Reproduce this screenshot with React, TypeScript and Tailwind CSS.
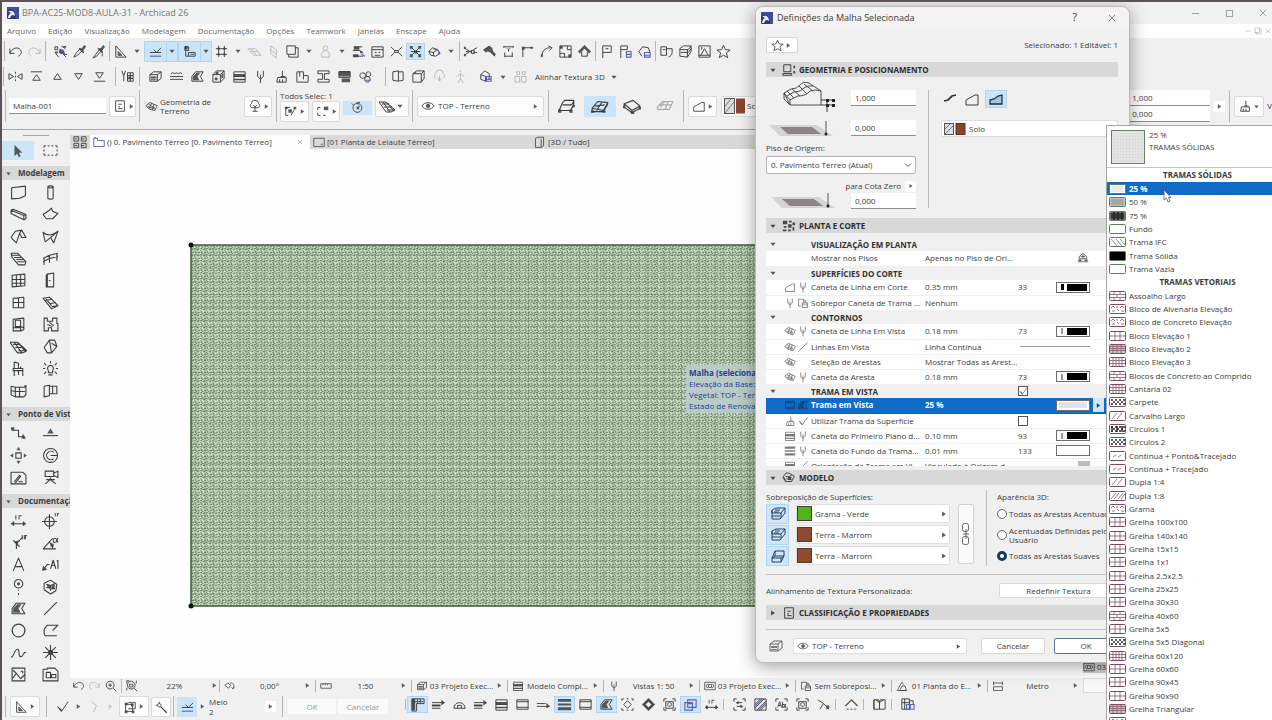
import { useState, type ReactNode } from 'react'

// s = stroke, f = fill, a = blue accent stroke
type Glyph = { s?: string; f?: string; a?: string }

const GLYPHS: Record<string, Glyph> = {
  undo: { s: 'M2 5v5h5M2 10C4 5 9 3 12 5s3 6-1 8' },
  redo: { s: 'M14 5v5H9M14 10C12 5 7 3 4 5s-3 6 1 8' },
  find: { s: 'M2 3h3v3H2zM10 10l4 4M9 2l4 3M3 10l3 4', f: 'M7 5l4 1 2 4-4 1-3-2zM2 8h3v2H2zM11 2h3v2h-3z', a: 'M8 6l3 4M11 11h4' },
  pick: { s: 'M2 14l2-4 5-5 2 2-5 5z', f: 'M8 4l2 1 3-4 2 2-3 4 1 2-1 1-5-5z' },
  inject: { s: 'M2 15l3-4 5-6 1 2-5 6z', f: 'M8 4l2 1 3-4 2 2-3 4 1 2-1 1-5-5z', a: 'M12 10v3' },
  setsq: { s: 'M3 2v12h11zM5.500 8v4h4z', f: 'M6 9v3h3z' },
  guide: { s: 'M2 9h12M6 6l3 3 5-5', a: 'M2 13h12' },
  snap: { s: 'M3 3h4v4H3zM4 8v5h3M7 9h7v4H7z', f: 'M3 2h3v4H3z', a: 'M9 11h4' },
  grid: { s: 'M5 2v12M11 2v12M2 5h12M2 11h12', f: 'M4 4h2v2H4zM10 4h2v2h-2zM4 10h2v2H4zM10 10h2v2h-2z' },
  plane: { s: 'M1 5h8l6 7H7zM4 5l6 7M3 8h9' },
  plane2: { s: 'M5 2l6 4v9l-6-5zM5 6l6 5' },
  cube: { s: 'M2 2h9v9H2zM4 11v3h10V4h-3' },
  person: { s: 'M8 2a2.500 2.500 0 1 1 0 5a2.500 2.500 0 1 1 0-5M4 14V10l2-3h4l2 3v4z' },
  trace: { s: 'M3 3h9M2 7h7l4 3M3 13h10', f: 'M3 3h6v3H3zM9 6l4 3-3 1zM2 11h6v3H2z', a: 'M11 11l4 2' },
  win: { s: 'M2 3h12v11H2zM2 6h12M5 9h2M9 9h2M5 12h6' },
  resize: { s: 'M2 3l4 4M14 3l-4 4M2 13l4-4M14 13l-4-4M6 7h4v2H6z' },
  group: { s: 'M4 4l8 8M12 4l-8 8M3 8h10', f: 'M2 2h3v3H2zM11 2h3v3h-3zM2 11h3v3H2zM11 11h3v3h-3zM7 7h3v3H7z' },
  morphb: { s: 'M2 8l4-4 5 2 3 4-5 3-5-1zM2 8l5 1 4-3M7 9v4', a: 'M7 5l5 2 1 4' },
  cut: { s: 'M1 4l8 5M1 12l8-5M11 6l4-2M11 9h4M3 8h3M9 7h3v3H9z', f: 'M1 3h2v2H1zM1 11h2v2H1z' },
  trim: { s: 'M9 8l5 5M3 6l6-4', f: 'M1 6l6-4 4 2 1 4 3 3-2 2-4-4-3-1-2 1z' },
  split: { s: 'M3 3h10M3 2v2M13 2v2M8 5v3M4 9v5M12 9v5M4 13h8', a: 'M6 5h1M9 5h1' },
  corner: { s: 'M3 14V4h9', f: 'M2 3h3v3H2zM11 3h3v2h-3z' },
  fillet: { s: 'M3 13C3 8 6 4 12 4M10 2l4 2-3 3', f: 'M2 11h2v3H2z' },
  box: { s: 'M2 2h12v12H2zM2 10h5v4M10 2v4h4', f: 'M2 2h3v3H2zM11 11h3v3h-3z' },
  house: { s: 'M5 8v5h6V8', f: 'M1 8l7-7 7 7-2 2-5-5-5 5z' },
  flag: { s: 'M4 15V2h9v7H4M7 5h3' },
  flagb: { s: 'M3 15V2h7v4H3', a: 'M9 8h5v6H9zM9 11h5' },
  cloud: { s: 'M5 13L2 8l4-5 6 1 2 5', a: 'M8 9h6v5H8zM8 12h6' },
  copy: { s: 'M2 3h6v9H2zM8 5h6v4c0 3-2 4-4 5M4 6h3' },
  layers: { s: 'M2 5l4-3h8l-3 4H3zM2 5v8l8 1 4-6V2M3 9h8l3-4M10 6v8' },
  lay2: { s: 'M2 4l4-2h9l-4 5H2zM2 4v9h8l5-6V2M2 10h8M11 7v5M5 4h5M4 6h5' },
  detail: { s: 'M2 2h12v12H2zM4 12l4-7 4 7M2 12h12M5 3v3' },
  star: { s: 'M8 1.500l2 4.500 5 .5-4 3 1.500 5L8 12l-4.500 2.500L5 9.500l-4-3 5-.5z' },
  mirror: { s: 'M1 5v6l5-3zM15 5v6l-5-3zM8 3v2M8 7v2M8 11v2' },
  upbar: { s: 'M2 3h12M8 6l4 6H4z' },
  up: { s: 'M8 5l4 6H4z' },
  down: { s: 'M8 11l4-6H4z' },
  downbar: { s: 'M2 13h12M8 10l4-6H4z' },
  penset: { s: 'M2 2l2 5v6M6 2l-2 5M8 4h6v9H8zM8 7h6M8 10h6M11 4v9', f: 'M9 8h3v3H9z' },
  slabs: { s: 'M2 6l4-3h8v7l-4 3H2zM2 6h8v7M10 6l4-3', f: 'M3 8h6v2H3zM3 11h6v1H3z' },
  waves: { s: 'M1 8h14M1 11h14M2 5l2-1 2 1 2-1 2 1 2-1 2 1' },
  fillc: { s: 'M2 13V8l4-5h8l-3 5 3 5z', f: 'M3 12V8l4-4h4L8 8l2 4z' },
  solid: { s: 'M2 6l4-4h8v8l-4 4H2zM2 6h8v8M10 6l4-4', f: 'M5 3h3v3H5zM4 9h3v3H4zM11 6l2-2v5l-2 1z' },
  layered: { s: 'M2 3h12v11H2zM2 6h12M2 8h12M2 11h12', f: 'M2 6h12v2H2zM2 11h12v1H2z' },
  pen: { s: 'M5 2v6l3 3 3-3V2M8 6v9' },
  brush: { s: 'M9 2v6M4 9h9v5H3zM7 8h5M6 11v3M9 11v3' },
  zonei: { s: 'M2 3h7v4h5v7H2zM5 3v5M9 7v4' },
  beami: { s: 'M2 2h12v3H9v6h5v3H2v-3h5V5H2z' },
  sched: { s: 'M2 3h12v6H2z', f: 'M2 2h12v6H2zM5 10h9v4H5z' },
  rings: { s: 'M5 4a3 3 0 1 0 .1 0M11 3a2.500 2.500 0 1 0 .1 0M10 8a3 3 0 1 0 .1 0', a: 'M8 12h5' },
  vcube: { s: 'M3 3l6-1v11l-6-1zM9 3h5v9l-5 1' },
  vcube2: { s: 'M2 5l4-3h8v8l-3 4H2zM2 5h9v9M11 5l3-3M5 5V3' },
  surfbox: { s: 'M2 10l3-7h9v5l-3 6H2zM5 3v5h9M5 8l-3 2h9l3-2M11 10v4' },
  cloud2: { s: 'M4 10a3 3 0 0 1 0-5a4 4 0 0 1 8 0a3 3 0 0 1 0 5M8 7v6M6 10l2 3 2-3' },
  walk: { s: 'M8 1.500v2M8 5v5l-3 5M8 10l3 5M4 8l4-3 4 3' },
  rend: { s: 'M3 6l4-4 5 3v5l-4 3-5-2zM3 6l5 2v5', a: 'M9 8h5v5H9zM9 11h5' },
  weights: { s: 'M2 8h5v6H2zM9 8h5v6H9zM4 3h3v3H4zM10 3h3v3h-3z' },
  form: { s: 'M3 2h10v12H3zM6 6h4M6 9h2M6 11h5' },
  meshi: { s: 'M1 7l5-4 9 4-3 6-7-2zM4 5l8 5M8 4L5 11M11 5L9 12M3 8l9 3' },
  tree: { s: 'M8 8v6M5 14h6M4 10a3 3 0 0 1 0-5a4 3.500 0 0 1 8 0a3 3 0 0 1 0 5zM6 7l2 2 2-2' },
  selA: { s: 'M2 4h5M2 4v9h3M8 13l4-7', f: 'M1 3h3v3H1zM5 6h4v4H5zM11 3h3v3h-3z' },
  selB: { s: 'M2 4h3M2 4v3M2 10v3h3M8 13h3', f: 'M9 3h5v4H9z' },
  clock: { s: 'M8 3a5.500 5.500 0 1 0 3 1M8 8l3-2M3 5L1 3', f: 'M6 2l5-1-1 4zM7 7h3v3H7z' },
  eye: { s: 'M1 8c3-5 11-5 14 0c-3 5-11 5-14 0z', f: 'M8 5.500a2.500 2.500 0 1 0 .1 0z' },
  geo1: { s: 'M1 12l3-7 2-2h8v4l-3 5zM4 7h8l2-3M1 12h10', f: 'M0 11h3v3H0zM10 11h3v3h-3zM13 7h2v2h-2z' },
  geo2: { s: 'M1 10l5-6 9 1-4 7zM3 8l9-1M5 12l5-8M1 10v3h10l4-7', f: 'M0 12h3v2H0zM10 12h3v2h-3z' },
  geo3: { s: 'M1 6l8-3 6 5-7 4zM1 6v3l7 5 7-4V8M8 12v2', f: 'M0 8h2v2H0zM7 13h3v2H7zM14 9h2v2h-2z' },
  geo4: { s: 'M1 9l5-5h9l-3 7H2zM4 9l4-5M8 11l3-7M3 7h11' },
  slope: { s: 'M2 14V9l9-5 3 0v10z' },
  thumbs: { s: 'M1 2h5.500v5H1zM9.500 2H15v5H9.500zM1 9.500h5.500v5H1zM9.500 9.500H15v5H9.500zM2 4.500h3M10 4.500h3M2 12h3M10 12h3' },
  plan: { a: 'M1 14V3h5v3h9v8zM1 3l3-1' },
  sheet: { s: 'M1 3h14v11H1zM10 11h3' },
  tcube: { s: 'M3 3l3-1.500h7V12l-3 2H3zM10 14V4' },
  arrow: { f: 'M4 1v13l3-3 2 4 2-1-2-4h4z' },
  marquee: { s: 'M1 3h2M5 3h2M9 3h2M13 3h2v2M15 7v2M15 11v2h-2M11 13H9M7 13H5M3 13H1v-2M1 9V7M1 5V3' },
  wall: { s: 'M1.500 3.500L14.500 2v9L9 13.500l-7.500.5z' },
  column: { s: 'M5.500 2.500c1-1 4-1 5 0v11c-1 1-4 1-5 0zM5.500 3c1 1 4 1 5 0' },
  beam: { s: 'M1 4l2-1 12 5v4l-2 1L1 7zM1 4l12 5v4M13 9l2-1' },
  slab: { s: 'M1 8l6-4 2-2 1 3 5 2-5 5H4z' },
  roof: { s: 'M1 9l4-6 6-1 4 7h-4l-2-4M11 2L9 5l-3 9-5-5' },
  shell: { s: 'M1 4c4 4 9 3 14-1l-4 11-3-5-5 4zM1 4l2 9M8 9l7-6' },
  stair: { s: 'M1 3h6l8 8-1 3H8L2 7zM2 5h7M4 7h7M6 9h7M7 11h7' },
  rail: { s: 'M1 8l6-3 8-2M1 11l6-3 8-2M2 8v6M7 5v7M14 3v7' },
  curtain: { s: 'M2 3l12-1v11L2 14zM2 7h12M2 10.500h12M6 3v11M10 2.500v11' },
  door: { s: 'M5 2l6-1v13H5zM5 2v12l-1 0V3zM6.500 8h1.500' },
  window: { s: 'M3 4l10-1v10H3zM3 8h10M8 3v10' },
  skyl: { s: 'M1 4l6-1 8 8-6 3zM4 5l5 6M3 6l7-1M8 9l5-1M9 12l5-1' },
  opening: { s: 'M3 3l10-1v11l-3 1H3zM5 4h5v6H5zM3 11h7v3M10 10l3 1' },
  zone: { s: 'M2 2h3v3h5V2h4v5h1v7H9v-3H6v3H2zM5 8l5 2M7 6l4 3' },
  mesh: { s: 'M0 4h7l9 8-4 2H7zM3 6h7M5 9h8M8 12h7M4 4l7 10M7 4l8 9' },
  morph: { s: 'M2 9l5-7h5l2 6-5 6H5zM7 2l2 12M9 5l5 3' },
  chair: { s: 'M4 2l4 1v5H4zM3 8h9v2H3zM4 10v5M8 10v4M12 10v5M10 6v2' },
  lamp: { s: 'M8 5a3 3 0 0 1 2 5v2H6v-2a3 3 0 0 1 2-5M6 14h4M8 1v2M2 3l2 2M14 3l-2 2M1 8h2M13 8h2M2 13l2-2M14 13l-2-2' },
  wall2: { s: 'M1 4l4 1h9V3M1 4v8l4 2h8l2-2V3M1 8l4 1h9M5 5v9M9 5v9' },
  panel: { s: 'M2 4l5-1v10l-5 1zM7 4h7v7H7M10 4v7' },
  section: { s: 'M2 5h6v6h6', f: 'M1 2h3v3H1zM12 8l3 5h-4z' },
  elev: { s: 'M1 10h14', f: 'M8 3l3 5H5z' },
  interior: { s: 'M5.500 5.500h5v5h-5z', f: 'M8 0l2 3H6zM8 16l2-3H6zM0 8l3-2v4zM16 8l-3-2v4z' },
  detailc: { s: 'M8 1.500a6.500 6.500 0 1 0 .1 0M11 5a4 4 0 1 0 0 6M8 8h7' },
  worksheet: { s: 'M1 3h11l3 3v8H1zM4 12l5-6 1 1-5 6M8 12h4' },
  camera: { s: 'M3 2h8v5H3zM11 4l4-2v6l-4-2M8 8v2M3 14l5-4 5 4M4 10h8' },
  dim: { s: 'M1 11h14M3 9v4M13 9v4', f: 'M1 11l3-2v4zM15 11l-3-2v4zM5 3h1v4H5zM8 3h3v1H9v3H8z' },
  level: { s: 'M7 4.500a4.500 4.500 0 1 0 .1 0M7 2v14M0 9h14', f: 'M12 1h1v3h-1zM14 1h2v1h-1v2h-1z' },
  radial: { s: 'M6 9l6-6M3 6l6 6M6 9v5', f: 'M4 7l4-1-1 5zM11 1h1v4h-1zM13 1h3v1h-1v3h-2z' },
  angle: { s: 'M1 14L10 4M1 14h12M7 8c2 1 3 3 3 6M12 4c-2 0-2 4 0 4s2-3 3-4M12 4c2 0 2 3 3 4', f: 'M8 9h3v3H8z' },
  text: { s: 'M3 14L8 2l5 12M5 10h6' },
  label: { s: 'M1 13l4-5h2M8 12l2.500-8 2.500 8M9 9h3M15 4v8M14 5l1-1', f: 'M0 14l1-5 4 4z' },
  hotlink: { s: 'M8 1.500a4 4 0 1 0 .1 0M8 11v1M8 14v2', f: 'M8 4a1.500 1.500 0 1 0 .1 0z' },
  patch: { s: 'M2 5l6-3 6 4-1 6-5 3-6-4zM4 6l4 1v5M8 7l5-2M4 9l8 1', f: 'M5 6l3 1v3l-3-1zM9 7l3-1v4l-3 1z' },
  line: { s: 'M2 14L14 2' },
  circle: { s: 'M8 2a6 6 0 1 0 .1 0' },
  poly: { s: 'M14 13H3l-1-2V7l3-4h10l-5 5' },
  spline: { s: 'M1 12c2 2 3-7 6-7s0 7 3 7 2-5 5-4' },
  hot: { s: 'M8 1v14M1 8h14M3 3l10 10M13 3L3 13', f: 'M8 5.500a2.500 2.500 0 1 0 .1 0z' },
  figure: { s: 'M2 2h12v12H2zM2 12l4-5 4 5 4-4M3 4l3 3M10 5h2v2' },
  drawing: { s: 'M1 3h4v-1h7l3 3v9H1zM4 6h4v5H4zM9 8h4v3H9z' },
  zoomi: { s: 'M7 2.500a4.500 4.500 0 1 0 .1 0M10.500 10.500L14 14M5 7h4M7 5v4' },
  zoomfit: { s: 'M7 2.500a4.500 4.500 0 1 0 .1 0M10.500 10.500L14 14M2 2v3M2 2h3M13 2v3M2 13v-3M5 6h4v3H5z' },
  rot: { s: 'M1 7l4-3 4 3-3 4zM8 4c5-1 6 4 4 7M10 10l2 2 2-3' },
  ruler: { s: 'M1 5h14v6H1zM4 5v2M7 5v2M10 5v2' },
  frame: { s: 'M1 3h14v10H1zM5 5L3 8l2 3M11 5l2 3-2 3M6 6h4v4H6z' },
  lock: { s: 'M2 3h7v3M2 3v9h3M7 8h7v6H7zM9 8V5h3v3', f: 'M7 10h7v1H7z' },
  roofi: { s: 'M2 13L8 3l2 3M8 8l-3 6h9l-2-6zM1 14h14' },
  dimh: { s: 'M2 2v5M14 2v5M2 4h12M2 9h12v5H2z' },
  check: { s: 'M3 8l4 5L14 3', f: 'M2 8l5 3 0 3z' },
  zig: { s: 'M5 3l5 4-3 7' },
  edit: { s: 'M3 5h8v8H3zM6 3h8v7H6M3 5l3-2', f: 'M2 3h3v3H2zM2 12h3v3H2zM10 12h3v3h-3zM9 4h3v3H9z' },
  wand: { s: 'M8 8l6 6M6 2v2M2 6h2M6 4a2 2 0 1 0 .1 0', f: 'M8 7l7 7-1 1-7-7z' },
  bars: { s: 'M1 6h13M1 9h9M1 12h9', f: 'M1 8h9v2H1zM11 3l4 3-4 3z' },
  barsf: { f: 'M1 2h14v3H1zM1 7h14v2H1zM1 11h14v3H1z' },
  tape: { s: 'M2 2h13v5H7v8H2zM2 5h12M5 2v12M4 2v12M8 2v4M11 2v4', f: 'M2 2h2v12H2z' },
  arc: { s: 'M2 12a6 6 0 0 1 12 0zM6 12V9h4v3' },
  arr: { s: 'M1 7h9M1 10h13', f: 'M11 6l4 4-4 2z' },
  plate: { s: 'M2 3h12v10H2zM2 5h12M2 11h12' },
  diamond: { s: 'M8 3l5 5-5 5-5-5z', f: 'M8 1l7 7-7 7-7-7zM8 5L5 8l3 3 3-3z' },
  diabox: { s: 'M2 2h2M7 2h2M12 2h2v2M14 12v2h-2M9 14H7M4 14H2v-2M2 4V2M8 4l4 4-4 4-4-4z' },
  stack: { a: 'M2 6h8v8H2zM5 3h9v8H5zM5 7h5' },
  abc: { s: 'M2 5V2h3M11 2h3v3M14 11v3h-3M5 14H2v-3M4 11l2-6 2 6M5 9h2M9 5v6h2V8H9M13 8h-1v3h1' },
  flip: { s: 'M2 5V2h3M11 2h3v3M14 11v3h-3M5 14H2v-3M5 6h6M5 10h6', f: 'M4 6l3-2v4zM12 10l-3-2v4z' },
  hatch: { s: 'M2 2h12v12H2zM2 8l6-6M2 12L12 2M4 14L14 4M8 14l6-6', a: 'M2 10l8-8M6 14l8-8' },
  imgf: { s: 'M2 5V2h3M11 2h3v3M14 11v3h-3M5 14H2v-3M4 5h8v7H4zM8 6a2 2 0 1 0 .1 0' },
  bend: { s: 'M2 3l6 4 4 4M8 7l-4 6', f: 'M11 9h3v4h-3z' },
  ridge: { s: 'M3 13h2M7 13h2M11 13h2', f: 'M1 9l7-7 7 7-1 1-6-6-6 6z' },
  book: { s: 'M2 3h5l1 2 1-2h5v10H2zM8 5v8M2 3v10M4 3L8 6l4-3' },
  story: { s: 'M3 6l5-4 5 4M3 6v4M13 6v4M8 3v6M4 9h8M1 13h14M5 6h6', f: 'M2 10h4v2H2zM10 10h4v2h-4z' },
  copyb: { s: 'M2 2h8v11H2zM2 6h8M5 2v11M10 4h4v4', a: 'M7 8h8v5H7zM11 8v5' },
  down1: { f: 'M4 6h8l-4 5z' },
  right1: { f: 'M5 4v8l6-4z' },
  terrain: { s: 'M1 7l4-5 4 1 5 3-3 6H4zM4 6l4 1 3-2M5 9l6 1M2 7l2 4', f: 'M7 6l4 1-1 3-3-1z' },
  geop: { s: 'M2 2h8v8H2zM1 12h10v2H1z', f: 'M13 3h2v3h-2zM13 9h2v3h-2z' },
  dots: { f: 'M1 2h5v4H1zM8 2h3v2H8zM12 4h3v3h-3zM2 8h3v2H2zM7 6h4v4H7zM12 9h2v4h-2zM1 12h4v2H1zM7 12h3v2H7z' },
  minus: { s: 'M3 8h10' },
  max: { s: 'M3.500 3.500h9v9h-9z' },
  close: { s: 'M3 3l10 10M13 3L3 13' },
}

function Icon({ name, className = 'size-4' }: { name: string; className?: string }) {
  const g = GLYPHS[name]
  return (
    <svg viewBox="0 0 16 16" className={`shrink-0 ${className}`} fill="none" strokeLinejoin="round" aria-hidden="true">
      {g.f && <path d={g.f} fill="currentColor" fillRule="evenodd" opacity=".85" />}
      {g.s && <path d={g.s} stroke="currentColor" strokeWidth="1" />}
      {g.a && <path d={g.a} stroke="#5a60b8" strokeWidth="1.2" />}
    </svg>
  )
}

// toolbar mini language: '|' separator, '_' small space, 'v' caret,
// leading '!' = active, leading '~' = disabled
function Tools({ items, cell }: { items: string[]; cell: string }) {
  return (
    <>
      {items.map((it, i) => {
        if (it === '|') return <span key={i} className="flex w-[3px] justify-center self-stretch py-[3px]"><span className="w-px bg-[#b5b5b5]" /></span>
        if (it === '_') return <span key={i} className="w-1" />
        if (it === 'v') return <button key={i} aria-label="Mais opções" className="flex w-[14px] justify-center"><Icon name="down1" className="size-[10px]" /></button>
        const active = it[0] === '!'
        const off = it[0] === '~'
        const name = active || off ? it.slice(1) : it
        return (
          <button
            key={i}
            aria-label={name}
            className={`flex items-center justify-center py-px ${cell} ${active ? 'bg-[#cbe4f8] outline -outline-offset-1 outline-[#b0d5f2]' : ''} ${off ? 'text-[#b9b9c0]' : ''}`}
          >
            <Icon name={name} className="size-[15px]" />
          </button>
        )
      })}
    </>
  )
}

function HotPair({ name }: { name: string }) {
  return (
    <span className="flex h-[21px] w-[34px] items-center border border-[#b0d5f2] bg-[#cbe4f8]">
      <button aria-label={name} className="flex w-[21px] justify-center"><Icon name={name} className="size-[15px]" /></button>
      <button aria-label="Mais opções" className="flex h-full flex-1 items-center justify-center border-l border-[#b0d5f2]"><Icon name="down1" className="size-[10px]" /></button>
    </span>
  )
}

const Sep = () => <span className="w-px shrink-0 self-stretch bg-[#b5b5b5]" />

const MENUS = ['Arquivo', 'Edição', 'Visualização', 'Modelagem', 'Documentação', 'Opções', 'Teamwork', 'Janelas', 'Enscape', 'Ajuda']

const PALETTE = [
  { title: 'Modelagem', tools: ['wall', 'column', 'beam', 'slab', 'roof', 'shell', 'stair', 'rail', 'curtain', 'door', 'window', 'skyl', 'opening', 'zone', 'mesh', 'morph', 'chair', 'lamp', 'wall2', 'panel'] },
  { title: 'Ponto de Vista', tools: ['section', 'elev', 'interior', 'detailc', 'worksheet', 'camera'] },
  { title: 'Documentação', tools: ['dim', 'level', 'radial', 'angle', 'text', 'label', 'hotlink', 'patch', 'fillc', 'line', 'circle', 'poly', 'spline', 'hot', 'figure', 'drawing'] },
]

const STATUS = [
  { icon: 'rot', text: '0,00°' },
  { icon: 'ruler', text: '1:50' },
  { icon: 'slabs', text: '03 Projeto Exec...' },
  { icon: 'layered', text: 'Modelo Compl...' },
  { icon: 'pen', text: 'Vistas 1: 50' },
  { icon: 'frame', text: '03 Projeto Exec...' },
  { icon: 'lock', text: 'Sem Sobreposi...' },
  { icon: 'roofi', text: '01 Planta do E...' },
  { icon: 'dimh', text: 'Metro' },
]

type Row = { head?: string; icons?: string[]; name?: string; value?: string; pen?: string; end?: string; selected?: boolean; check?: boolean }

const ROWS: Row[] = [
  { head: 'VISUALIZAÇÃO EM PLANTA' },
  { name: 'Mostrar nos Pisos', value: 'Apenas no Piso de Ori...', end: 'story' },
  { head: 'SUPERFÍCIES DO CORTE' },
  { icons: ['slope', 'pen'], name: 'Caneta de Linha em Corte', value: '0.35 mm', pen: '33', end: 'thick' },
  { icons: ['pen', 'lock'], name: 'Sobrepor Caneta de Trama ...', value: 'Nenhum' },
  { head: 'CONTORNOS' },
  { icons: ['meshi', 'pen'], name: 'Caneta de Linha Em Vista', value: '0.18 mm', pen: '73', end: 'thin' },
  { icons: ['meshi', 'line'], name: 'Linhas Em Vista', value: 'Linha Contínua', end: 'line' },
  { icons: ['meshi'], name: 'Seleção de Arestas', value: 'Mostrar Todas as Arest...' },
  { icons: ['meshi', 'pen'], name: 'Caneta da Aresta', value: '0.18 mm', pen: '73', end: 'thin' },
  { head: 'TRAMA EM VISTA', check: true },
  { icons: ['plate', 'fillc'], name: 'Trama em Vista', value: '25 %', end: 'fill', selected: true },
  { icons: ['brush', 'check'], name: 'Utilizar Trama da Superfície', check: false },
  { icons: ['layered', 'pen'], name: 'Caneta do Primeiro Plano d...', value: '0.10 mm', pen: '93', end: 'thin' },
  { icons: ['barsf', 'pen'], name: 'Caneta do Fundo da Trama...', value: '0.01 mm', pen: '133', end: 'blank' },
  { icons: ['layered', 'line'], name: 'Orientação da Trama em Vi...', value: 'Vinculado à Origem d...', end: 'grey' },
]

const SOLID = [
  ['25 %', 'light'], ['50 %', 'mid'], ['75 %', 'dark'], ['Fundo', 'none'],
  ['Trama IFC', 'back'], ['Trama Sólida', 'solid'], ['Trama Vazia', 'none'],
]
const VECTOR = [
  ['Assoalho Largo', 'bricks'], ['Bloco de Alvenaria Elevação', 'dots'], ['Bloco de Concreto Elevação', 'dots'],
  ['Bloco Elevação 1', 'grid'], ['Bloco Elevação 2', 'dense'], ['Bloco Elevação 3', 'dense2'],
  ['Blocos de Concreto ao Comprido', 'bricks'], ['Cantaria 02', 'dense2'], ['Carpete', 'checks'], ['Carvalho Largo', 'diag'],
  ['Círculos 1', 'checker'], ['Círculos 2', 'checks'], ['Contínua + Ponto&Tracejado', 'faint'], ['Contínua + Tracejado', 'faint'],
  ['Dupla 1:4', 'diag'], ['Dupla 1:8', 'diag2'], ['Grama', 'dots'], ['Grelha 100x100', 'grid'], ['Grelha 140x140', 'grid'],
  ['Grelha 15x15', 'grid'], ['Grelha 1x1', 'grid'], ['Grelha 2.5x2.5', 'grid'], ['Grelha 25x25', 'grid'], ['Grelha 30x30', 'grid'],
  ['Grelha 40x60', 'bricks'], ['Grelha 5x5', 'grid'], ['Grelha 5x5 Diagonal', 'checks'], ['Grelha 60x120', 'dense2'],
  ['Grelha 60x60', 'grid'], ['Grelha 90x45', 'grid'], ['Grelha 90x90', 'grid'], ['Grelha Triangular', 'dense'], ['Hexagonal', 'dots'],
]

const HATCH: Record<string, string> = {
  none: '',
  solid: '',
  light: 'M3 3h11M3 5h11M3 7h11',
  mid: 'M2 3h13M2 5h13M2 7h13',
  dark: 'M2 3h13M2 5h13M2 7h13M5 1v8M9 1v8M13 1v8',
  back: 'M2 2l6 7M7 2l6 7M11 2l5 6',
  bricks: 'M1 3.500h15M1 6.500h15M5 1v2M11 1v2M8 4v2M5 7v2M11 7v2',
  dots: 'M2 4l2-2 2 2M7 3h2M11 4l2-2 2 2M3 7h3M8 5l2 2M12 7h3',
  grid: 'M1 5h15M6 1v8M11 1v8',
  dense: 'M1 2.500h15M1 4.500h15M1 6.500h15M4 1v8M8 1v8M12 1v8',
  dense2: 'M1 3.500h15M1 6.500h15M4 1v8M7 1v8M10 1v8M13 1v8',
  checks: 'M2 3h2M6 3h2M10 3h2M14 3h2M4 5h2M8 5h2M12 5h2M2 7h2M6 7h2M10 7h2M14 7h2',
  checker: 'M2 3h2M6 3h2M10 3h2M14 3h2M4 5h2M8 5h2M12 5h2M2 7h2M6 7h2M10 7h2M14 7h2M3 2v6M8 2v6M13 2v6',
  diag: 'M3 8l5-6M8 8l5-6',
  diag2: 'M2 8l5-6M5 8l5-6M9 8l5-6M12 8l4-5',
  faint: 'M4 6l3-2M9 6l3-2',
}

function Swatch({ kind, vector }: { kind: string; vector?: boolean }) {
  const dark = ['checks', 'checker', 'dark'].includes(kind)
  const line = dark ? '#2a2226' : vector ? '#8d6674' : '#7b857b'
  return (
    <svg viewBox="0 0 17 10" className="h-[10px] w-[17px] shrink-0" aria-hidden="true">
      <rect x=".5" y=".5" width="16" height="9" rx="1" fill={kind === 'solid' ? '#000' : kind === 'mid' || kind === 'dense' ? '#c9c5c6' : kind === 'dark' ? '#777' : '#fff'} stroke={vector ? '#7c4a5c' : '#5f7a5b'} />
      <path d={HATCH[kind]} stroke={line} strokeWidth={dark ? 1.4 : 0.9} fill="none" opacity={kind === 'light' ? 0.4 : 1} />
    </svg>
  )
}

function PenBox({ kind }: { kind?: string }) {
  if (!kind) return null
  if (kind === 'story') return <Icon name="story" className="ml-auto mr-[1px] size-3" />
  if (kind === 'line') return <span className="-ml-[36px] block h-px bg-[#9a9a9a]" />
  if (kind === 'grey') return <span className="ml-auto block h-[10px] w-3 bg-[#bdbdbd]" />
  return (
    <span className="flex h-[11px] items-center gap-[2px] border border-[#6d6d6d] bg-white px-[2px]">
      {kind === 'thick' && <span className="ml-[2px] h-[6px] w-[3px] bg-black" />}
      {kind === 'thin' && <span className="ml-[2px] h-[6px] w-[2px] bg-[#999]" />}
      {(kind === 'thick' || kind === 'thin') && <span className="ml-auto h-[7px] w-5 bg-black" />}
      {kind === 'fill' && <span className="h-[6px] w-full bg-[#e4e0ee]" />}
    </span>
  )
}

function Section({ icon, title, open = true }: { icon: string; title: string; open?: boolean }) {
  return (
    <h2>
      <button className="flex h-[15px] w-full items-center bg-[#d9d8d8] pl-[2px] text-left font-bold text-[#2e2e2e]">
        <Icon name={open ? 'down1' : 'right1'} className="size-[10px]" />
        <Icon name={icon} className="ml-1 mr-[3px] size-[14px]" />
        {title}
      </button>
    </h2>
  )
}

function Num({ label, value, className = '' }: { label: string; value: string; className?: string }) {
  return <input aria-label={label} defaultValue={value} className={`h-4 border-b border-[#8e8e8e] bg-white px-1 text-[8px] outline-none ${className}`} />
}

function Plane() {
  return (
    <svg viewBox="0 0 66 18" className="h-[18px] w-[66px]" aria-hidden="true">
      <path d="M1 5h48l16 11H12z" fill="#d6d3d5" />
      <path d="M12 7h32l9 7H20z" fill="#8e8588" />
      <path d="M58 1v13" stroke="#555" /><circle cx="58" cy="14" r="1.500" fill="#222" />
    </svg>
  )
}

function SurfaceRow({ icon, color, label }: { icon: string; color: string; label: string }) {
  return (
    <div className="flex h-[21px] items-center">
      <button aria-label={label} className="mr-[7px] flex h-5 w-[23px] items-center justify-center border border-[#b0d5f2] bg-[#cfe6f8] text-[#23415c]"><Icon name={icon} className="h-4 w-[18px]" /></button>
      <button className="flex h-[19px] flex-1 items-center rounded-[2px] border border-[#dedede] bg-white text-left">
        <span className={`mr-[3px] size-[15px] border border-[#4e3b30] ${color}`} />
        {label}
        <Icon name="right1" className="ml-auto size-[10px]" />
      </button>
    </div>
  )
}

function Logo() {
  return (
    <svg viewBox="0 0 12 12" className="size-3 shrink-0" aria-hidden="true">
      <rect width="12" height="12" rx="1" fill="#2e3878" />
      <path d="M0 0h12v12H9C9 3 5 0 0 4z" fill="#3d4ea2" />
      <path d="M1 5c4-3 7 0 7 4-2-2-4-1-5 2H1c0-2 1-4 3-5-1-1-2-1-3-1z" fill="#e8ebf7" />
    </svg>
  )
}

function SettingsTable() {
  return (
    <div className="mt-1 h-[229px] overflow-hidden">
      <table className="w-full table-fixed border-collapse text-left">
        <colgroup>
          <col className="w-[45px]" /><col className="w-[114px]" /><col className="w-[93px]" />
          <col className="w-[38px]" /><col className="w-[34px]" /><col />
        </colgroup>
        <tbody>
          {ROWS.map((r, i) =>
            r.head ? (
              <tr key={i} className="h-[14px] bg-[#f1f0f0] leading-[13px]">
                <td className="p-0 pl-[2px]"><Icon name="down1" className="size-[10px]" /></td>
                <th colSpan={2} className="p-0 font-bold text-[#333]">{r.head}</th>
                <td className="p-0">{r.check && <Tick on />}</td>
                <td className="p-0" colSpan={2} />
              </tr>
            ) : (
              <tr key={i} className={`h-[15px] border-b leading-[14px] ${r.selected ? 'border-[#0b62b8] bg-[#0f6cc6] font-bold text-white' : 'border-[#efefef] bg-white'}`}>
                <td className="p-0">
                  <span className={`flex gap-[1px] pl-[18px] ${r.selected ? 'text-[#0a3d78]' : 'text-[#666]'}`}>
                    {r.icons?.map((n, k) => <Icon key={k} name={n} className="size-3" />)}
                  </span>
                </td>
                <td className="truncate p-0 text-clip">{r.name}</td>
                <td className="truncate p-0 text-clip">{r.value}</td>
                <td className="p-0">{r.check === false ? <Tick /> : r.pen}</td>
                <td className="p-0"><PenBox kind={r.end} /></td>
                <td className="p-0">{r.selected && <span className="ml-[3px] flex h-[14px] w-[11px] items-center justify-center bg-[#cfe6f8] text-[#123]"><Icon name="right1" className="size-[9px]" /></span>}</td>
              </tr>
            ),
          )}
        </tbody>
      </table>
    </div>
  )
}

function Tick({ on = false }: { on?: boolean }) {
  return (
    <span className="relative block size-[10px]">
      <input type="checkbox" aria-label={on ? 'Trama em vista' : 'Utilizar Trama da Superfície'} defaultChecked={on} className="block size-[10px] appearance-none border border-[#555] bg-white" />
      {on && <Icon name="check" className="pointer-events-none absolute left-0 top-0 size-[10px]" />}
    </span>
  )
}

function Dialog() {
  const [edges, setEdges] = useState(2)
  return (
    <section role="dialog" aria-label="Definições da Malha Selecionada" className="absolute left-[753px] top-[4px] w-[375px] rounded-lg border border-[#bcbcbc] bg-[#f1f0f0] shadow-[0_3px_18px_rgba(0,0,0,.38)]">
      <header className="flex h-[21px] items-center gap-1 rounded-t-lg bg-[#f4f2f3] pl-[5px] pr-3 text-[9px]">
        <Logo />
        <h1>Definições da Malha Selecionada</h1>
        <button className="ml-auto mr-[26px] text-[11px]">?</button>
        <button aria-label="Fechar"><Icon name="close" className="size-[10px]" /></button>
      </header>

      <div className="pl-[10px] pr-[11px]">
        <div className="flex h-[34px] items-center justify-between">
          <button aria-label="Favoritos" className="flex h-4 items-center rounded-[2px] border border-[#d5d5d5] bg-white px-1">
            <Icon name="star" className="size-[13px]" /><Icon name="right1" className="size-[9px]" />
          </button>
          <span>Selecionado: 1 Editável: 1</span>
        </div>

        <Section icon="geop" title="GEOMETRIA E POSICIONAMENTO" />
        <div className="flex h-[141px] pt-[13px]">
          <div className="w-[150px]">
            <div className="flex justify-between">
              <div className="flex flex-col items-start pl-[2px]">
                <svg viewBox="0 0 60 30" className="-mt-2 ml-[10px] h-[30px] w-[60px]" aria-hidden="true" fill="none" stroke="#3a3a3a">
                  <path d="M6 11l7-4q6 0 9-4t9-2l12 8v14H12zM6 11l6 7 8-4q8 0 12-5 5-2 11-0M6 11v6l6 6v-5M9 14l7-4q7 0 10-4 4-3 9-2M9 9l7 7M14 7l8 7M21 4l8 8M26 2l9 7" strokeWidth=".9" />
                  <path d="M43 18h12M43 23h12M49 18v12" />
                  <path d="M48 17h3v3h-3zM48 22h3v3h-3zM54 17h3v3h-3zM54 22h3v3h-3z" fill="#222" stroke="none" />
                </svg>
                <div className="mt-[8px]"><Plane /></div>
              </div>
              <div className="flex flex-col gap-[14px]">
                <Num label="Altura" value="1,000" className="w-[65px]" />
                <Num label="Elevação" value="0,000" className="w-[65px]" />
              </div>
            </div>
            <label htmlFor="piso" className="mt-1 block leading-[11px]">Piso de Origem:</label>
            <div className="relative mt-[3px]">
              <select id="piso" className="h-[18px] w-full appearance-none rounded-[2px] border border-[#b5b5b5] bg-white px-1 text-[8px]">
                <option>0. Pavimento Térreo (Atual)</option>
              </select>
              <svg viewBox="0 0 8 8" className="pointer-events-none absolute right-1 top-[5px] size-2" fill="none" stroke="#555"><path d="M1 2.500l3 3 3-3" /></svg>
            </div>
            <div className="mt-[6px] flex items-center justify-end gap-1 leading-[12px]">
              para Cota Zero
              <button aria-label="Escolher cota" className="flex size-[11px] items-center justify-center rounded-[2px] bg-white"><Icon name="right1" className="size-2" /></button>
            </div>
            <div className="flex items-center justify-between pl-[4px]">
              <Plane />
              <Num label="Cota" value="0,000" className="w-[65px]" />
            </div>
          </div>
          <div className="mx-3 mb-[10px] w-px bg-[#bdbdbd]" />
          <div className="flex-1">
            <div className="flex h-[18px] items-center gap-1">
              <button aria-label="Somente superfície" className="flex size-[18px] items-center justify-center">
                <svg viewBox="0 0 16 16" className="size-4" fill="none" stroke="#333" strokeWidth="1.800"><path d="M2 10l4-1 4-4 4-1" /></svg>
              </button>
              <button aria-label="Com saia" className="flex size-[18px] items-center justify-center"><Icon name="slope" /></button>
              <button aria-label="Sólido" className="flex h-[18px] w-[22px] items-center justify-center border border-[#b0d5f2] bg-[#cbe4f8]">
                <svg viewBox="0 0 16 16" className="size-4" fill="#9fc4e4" stroke="#26323d" strokeWidth="1.300"><path d="M2 13V9l4-1 4-3 4-1v9z" /></svg>
              </button>
            </div>
            <button className="mt-3 flex h-[17px] w-full items-center rounded-[2px] border border-[#dedede] bg-white pl-[2px]">
              <svg viewBox="0 0 22 12" className="mr-[3px] h-3 w-[22px]" aria-hidden="true">
                <rect x=".5" y=".5" width="9" height="11" fill="#ddd" stroke="#555" /><path d="M1 11L9 3M1 6l5-5" stroke="#777" />
                <rect x="12" y=".5" width="9" height="11" fill="#88452c" stroke="#5d3020" />
              </svg>
              Solo
            </button>
          </div>
        </div>

        <Section icon="dots" title="PLANTA E CORTE" />
        <SettingsTable />

        <div className="mt-1"><Section icon="terrain" title="MODELO" /></div>
        <div className="flex pt-[5px]">
          <div className="w-[184px]">
            <p className="leading-[13px]">Sobreposição de Superfícies:</p>
            <SurfaceRow icon="lay2" color="bg-[#4db51b]" label="Grama - Verde" />
            <SurfaceRow icon="lay2" color="bg-[#8f4a30]" label="Terra - Marrom" />
            <SurfaceRow icon="surfbox" color="bg-[#8f4a30]" label="Terra - Marrom" />
          </div>
          <button aria-label="Vincular superfícies" className="mb-[2px] ml-[8px] mt-[14px] flex w-4 items-center justify-center rounded-[2px] border border-[#d2d2d2] bg-[#fafafa]">
            <svg viewBox="0 0 10 24" className="h-6 w-[10px]" fill="none" stroke="#666"><rect x="1.500" y="1.500" width="6" height="8" rx="2" /><rect x="1.500" y="14.500" width="6" height="8" rx="2" /><path d="M5 7v10M2 12h6" /></svg>
          </button>
          <div className="mr-[10px] ml-3 w-px bg-[#bdbdbd]" />
          <fieldset className="flex-1">
            <legend className="leading-[13px]">Aparência 3D:</legend>
            {['Todas as Arestas Acentuadas', 'Acentuadas Definidas pelo Usuário', 'Todas as Arestas Suaves'].map((t, i) => (
              <label key={t} className="flex h-[21px] items-center gap-[2px] leading-[9px]">
                <input
                  type="radio"
                  name="edges"
                  checked={edges === i}
                  onChange={() => setEdges(i)}
                  className="size-[10px] shrink-0 appearance-none rounded-full border border-[#666] bg-white checked:border-[3px] checked:border-[#123a6b]"
                />
                <span className={i === 1 ? 'w-[108px]' : 'whitespace-nowrap'}>{t}</span>
              </label>
            ))}
          </fieldset>
        </div>
        <div className="mt-[8px] h-px bg-[#c3c1c1]" />
        <div className="flex h-[30px] items-center justify-between pt-px">
          <span>Alinhamento de Textura Personalizada:</span>
          <button className="h-[15px] w-[119px] rounded-[2px] border border-[#d8d8d8] bg-white">Redefinir Textura</button>
        </div>
        <Section icon="form" title="CLASSIFICAÇÃO E PROPRIEDADES" open={false} />
        <div className="mt-[9px] h-px bg-[#c3c1c1]" />
        <footer className="flex h-[32px] items-center">
          <Icon name="slabs" className="mr-[7px] h-4 w-5 text-[#666]" />
          <button className="flex h-[16px] w-[174px] items-center gap-[3px] rounded-[2px] border border-[#dedede] bg-white px-[3px]">
            <Icon name="eye" className="size-[12px]" />TOP - Terreno<Icon name="right1" className="ml-auto size-[9px]" />
          </button>
          <button className="ml-[14px] h-4 w-[64px] rounded-[2px] border border-[#d5d5d5] bg-white">Cancelar</button>
          <button className="ml-[9px] h-4 w-[64px] rounded-[2px] border border-[#5f7390] bg-white">OK</button>
        </footer>
      </div>
    </section>
  )
}

function FillMenu() {
  const entry = ([name, kind]: string[], vector: boolean) => {
    const on = name === '25 %'
    return (
      <li key={name} className={`relative h-[13px] ${on ? 'bg-[#0f6cc6] font-bold text-white' : ''}`}>
        <button className="flex h-full w-full items-center gap-[3px] whitespace-nowrap pl-[2px] text-left">
          <Swatch kind={kind} vector={vector} />
          {name}
        </button>
        {on && (
          <svg viewBox="0 0 9 14" className="absolute left-[56px] top-[7px] z-10 h-[14px] w-[9px]" aria-hidden="true">
            <path d="M1 1v10l2.500-2 1.500 4 2-1-1.500-3.500H8z" fill="#fff" stroke="#555" strokeWidth=".8" />
          </svg>
        )}
      </li>
    )
  }
  return (
    <aside className="absolute bottom-0 left-[1104px] right-0 top-[123px] overflow-hidden border-l border-t border-[#a5a5a5] bg-white">
      <div className="flex h-[42px] gap-1 border-b border-[#c4c4c4] pl-[4px] pt-1">
        <svg viewBox="0 0 34 34" className="size-[34px]" aria-hidden="true">
          <defs><pattern id="prev" width="3" height="3" patternUnits="userSpaceOnUse"><rect width="3" height="3" fill="#e4e3e4" /><path d="M0 0h1v1H0z" fill="#cfd1cf" /></pattern></defs>
          <rect x=".5" y=".5" width="33" height="33" fill="url(#prev)" stroke="#6c7f69" />
        </svg>
        <p className="-mt-px leading-[12px]"><span className="block">25 %</span>TRAMAS SÓLIDAS</p>
      </div>
      <ul className="[&>li:nth-child(3n)]:h-[14px]">
        <li className="flex h-[14px] items-center justify-center pl-4 font-bold">TRAMAS SÓLIDAS</li>
        {SOLID.map((e) => entry(e, false))}
        <li className="flex items-center justify-center pl-4 font-bold">TRAMAS VETORIAIS</li>
        {VECTOR.map((e) => entry(e, true))}
      </ul>
    </aside>
  )
}

function Popup({ icon, className = '', children }: { icon?: string; className?: string; children?: ReactNode }) {
  return (
    <button aria-label={icon} className={`flex h-[21px] items-center rounded-[2px] border border-[#dadada] bg-[#fcfcfc] px-[3px] ${className}`}>
      {icon && <Icon name={icon} className="size-[14px]" />}
      {children}
      <Icon name="right1" className="ml-auto size-[9px]" />
    </button>
  )
}

function InfoBox() {
  return (
    <div className="flex h-[41px] shrink-0 items-start border-b border-[#a9a9a9] pl-[3px] pt-px">
      <div className="flex h-[32px] shrink-0 items-center">
        <Sep />
        <Num label="ID" value="Malha-001" className="ml-[3px] w-[97px]" />
        <Popup icon="form" className="mx-[3px] w-[27px]" />
        <Sep />
        <Icon name="meshi" className="ml-[5px] size-[13px]" />
        <span className="ml-[2px] w-[84px] pr-4 leading-[9px]">Geometria de Terreno</span>
        <Popup icon="tree" className="mr-1 w-[28px]" />
        <Sep />
        <div className="mx-[3px] flex flex-col gap-px">
          <span className="leading-[9px]">Todos Selec: 1</span>
          <div className="flex gap-[3px]">
            <Popup icon="selA" className="h-[14px] w-[29px]" />
            <Popup icon="selB" className="h-[14px] w-[28px]" />
            <button aria-label="Seleção" className="flex h-[14px] w-[29px] items-center justify-center bg-[#cbe4f8]"><Icon name="clock" className="size-[13px]" /></button>
          </div>
        </div>
        <button aria-label="Malha" className="mr-[3px] flex h-[21px] w-[34px] items-center justify-center rounded-[2px] border border-[#dadada] bg-[#fcfcfc]"><Icon name="mesh" className="size-[16px]" /><Icon name="down1" className="size-[10px]" /></button>
        <Sep />
        <Popup icon="eye" className="mx-1 w-[127px]"><span className="ml-[3px]">TOP - Terreno</span></Popup>
        <Sep />
        <div className="mx-[2px] flex w-[130px] justify-between">
          {['geo1', 'geo2', 'geo3', 'geo4'].map((n) => (
            <button key={n} aria-label={n} className={`flex h-[21px] w-[32px] items-center justify-center ${n === 'geo2' ? 'bg-[#cbe4f8]' : ''} ${n === 'geo4' ? 'text-[#aaa]' : ''}`}><Icon name={n} className="h-[18px] w-[22px]" /></button>
          ))}
        </div>
        <Sep />
        <Popup icon="slope" className="mx-1 w-[29px]" />
        <button className="flex h-[21px] w-[120px] items-center gap-px rounded-[2px] border border-[#dadada] bg-[#fcfcfc] pl-[2px]">
          <svg viewBox="0 0 22 16" className="h-4 w-[22px]" aria-hidden="true"><rect x=".5" y=".5" width="10" height="15" fill="#ddd" stroke="#555" /><path d="M1 15L10 4M1 8l6-7" stroke="#777" /><rect x="12" y=".5" width="9" height="15" fill="#88452c" /></svg>
          Solo
        </button>
      </div>
      <div className="ml-auto flex h-[32px] shrink-0 items-center">
        <div className="flex flex-col">
          <Num label="Altura da malha" value="1,000" className="w-[82px]" />
          <Num label="Base da malha" value="0,000" className="w-[82px]" />
        </div>
        <button aria-label="Base" className="mx-[4px] flex size-[11px] items-center justify-center bg-white"><Icon name="right1" className="size-[9px]" /></button>
        <Sep />
        <button aria-label="Superfície" className="ml-1 mr-[3px] flex h-[21px] w-[30px] items-center justify-center rounded-[2px] border border-[#dadada] bg-[#fcfcfc]"><Icon name="brush" className="size-[14px]" /><Icon name="down1" className="size-[9px]" /></button>
        V
      </div>
    </div>
  )
}

function Canvas() {
  return (
    <div className="relative min-h-0 flex-1 overflow-hidden bg-[#fefefe]">
      <svg className="absolute left-[118px] top-[93px] h-[367px] w-[880px]" aria-hidden="true">
        <defs>
          <pattern id="weave" width="6" height="6" patternUnits="userSpaceOnUse">
            <rect width="6" height="6" fill="#b0c5a9" />
            <path d="M0 0h2v1H0zM3 1h2v1H3zM1 3h1v2H1zM4 4h2v1H4zM2 5h1v1H2z" fill="#728d6d" />
            <path d="M2 2h1v1H2zM5 2h1v1H5zM3 3h1v1H3zM0 5h1v1H0z" fill="#d6e3d0" />
            <path d="M0 2h1v1H0zM4 0h1v1H4z" fill="#8ea589" />
          </pattern>
          <pattern id="weft" width="17" height="13" patternUnits="userSpaceOnUse">
            <path d="M0 .5h17M0 7h9M.5 0v13M9 3v8" stroke="#4f6b50" strokeOpacity=".26" fill="none" />
            <path d="M3 0v13M12 0v13M0 4h17" stroke="#fff" strokeOpacity=".2" fill="none" />
          </pattern>
        </defs>
        <rect x="3" y="3" width="870" height="361" fill="url(#weave)" />
        <rect x="3" y="3" width="870" height="361" fill="url(#weft)" stroke="#3c5a3a" strokeWidth="1.500" />
        <circle cx="3" cy="3" r="2.500" fill="#111" />
        <circle cx="3" cy="364" r="2.500" fill="#111" />
      </svg>
      <div className="absolute left-[616px] top-[216px] whitespace-nowrap bg-[#bccdcb]/90 px-[3px] py-[2px] leading-[11px] text-[#2c3e93]">
        <p className="font-bold">Malha (selecionada)</p>
        <p>Elevação da Base: 0,000</p>
        <p>Vegetal: TOP - Terreno</p>
        <p>Estado de Renovação</p>
      </div>
      <div className="absolute bottom-[5px] left-[1013px] flex h-[13px] w-[30px] items-center gap-[2px] bg-[#d2d0d0]"><Icon name="frame" className="size-3" />03</div>
    </div>
  )
}

export default function App() {
  return (
    <div className="relative flex h-screen w-full select-none flex-col overflow-hidden border-l-2 border-t-2 border-[#5d5356] bg-[#f1f0f0] font-['Open_Sans','Noto_Sans',sans-serif] text-[8px] text-[#3c3c3c]">
      <header className="flex h-[22px] shrink-0 items-center gap-[3px] bg-[#f3f2f2] pl-[5px] text-[9px] text-[#777]">
        <Logo />
        <span>BPA-AC25-MOD8-AULA-31 - Archicad 26</span>
        <div className="ml-auto flex items-center gap-[23px] pr-[4px]">
          <button aria-label="Minimizar"><Icon name="minus" className="size-[11px]" /></button>
          <button aria-label="Maximizar"><Icon name="max" className="size-[11px]" /></button>
          <button aria-label="Fechar"><Icon name="close" className="size-[10px]" /></button>
        </div>
      </header>
      <nav className="flex h-[14px] shrink-0 items-center gap-3 bg-white pl-[5px] text-[#666]">
        {MENUS.map((m) => <button key={m}>{m}</button>)}
        <div className="ml-auto flex items-center gap-[2px] text-[#999]">
          <Icon name="minus" className="size-2" /><Icon name="cube" className="size-2" /><Icon name="close" className="size-2" />
        </div>
      </nav>

      <div className="flex h-[26px] shrink-0 items-center pl-px">
        <Tools cell="w-[19px]" items={['|', 'undo', '~redo', '|', '_', 'find', 'pick', 'inject', '|', 'setsq', 'v']} />
        <HotPair name="guide" />
        <HotPair name="snap" />
        <Tools cell="w-[19px]" items={['grid', 'v', '~plane', '~plane2', 'cube', 'v', '~person', 'v', 'trace', 'win', 'resize', '!group', 'morphb', 'v', '|', 'cut', 'trim', 'split', 'corner', 'fillet', 'box', 'house', '|', 'flag', 'flagb', 'cloud', '|', 'copy', 'layers', 'detail', 'star']} />
      </div>
      <div className="flex h-[25px] shrink-0 items-center">
        <Tools cell="w-[21px]" items={['|', 'mirror', 'upbar', 'up', 'down', 'downbar', '_', '|', 'penset', '|', '_', 'slabs', 'waves', 'fillc', 'solid', 'layered', 'pen', 'brush', 'zonei', 'beami', 'sched', 'rings', '_', '_', '|', 'vcube', 'vcube2', '~cloud2', '~walk', '_', 'rend', 'v', '~weights', '_']} />
        <button className="flex items-center gap-1">Alinhar Textura 3D <Icon name="down1" className="size-[10px]" /></button>
      </div>

      <InfoBox />

      <div className="flex min-h-0 flex-1">
        <aside className="flex w-[68px] shrink-0 flex-col overflow-hidden">
          <div className="mx-auto my-[5px] h-px w-[26px] shrink-0 bg-[#aaa]" />
          <div className="flex h-[19px] shrink-0">
            <button aria-label="Seta" className="flex w-8 items-center justify-center bg-[#cbe4f8]"><Icon name="arrow" className="size-[14px]" /></button>
            <button aria-label="Marquise" className="flex w-8 items-center justify-center"><Icon name="marquee" className="size-[15px]" /></button>
          </div>
          {PALETTE.map((g) => (
            <div key={g.title} className="mt-[6px] shrink-0">
              <button className="mb-px flex h-[14px] w-full items-center gap-[5px] overflow-hidden whitespace-nowrap bg-[#d9d8d8] pl-[2px] font-bold">
                <Icon name="down1" className="size-[9px]" />{g.title}
              </button>
              <div className="grid grid-cols-2 pr-1">
                {g.tools.map((t) => <button key={t} aria-label={t} className="flex h-[22px] items-center justify-center"><Icon name={t} className="size-[17px]" /></button>)}
              </div>
            </div>
          ))}
        </aside>

        <main className="flex min-w-0 flex-1 flex-col">
          <div className="mt-[5px] flex h-[14px] shrink-0 items-center bg-[#dad9d9]">
            <button aria-label="Abas" className="flex w-5 justify-center"><Icon name="thumbs" className="size-[14px]" /></button>
            <button className="flex h-full w-[220px] items-center gap-[2px] bg-[#fdfdfd] px-[3px]">
              <Icon name="plan" className="size-[12px]" />() 0. Pavimento Térreo [0. Pavimento Térreo]
              <Icon name="close" className="ml-auto mr-1 size-[6px]" />
            </button>
            <button className="flex w-[220px] items-center gap-[2px] px-[3px]"><Icon name="sheet" className="size-[12px]" />[01 Planta de Leiaute Térreo]</button>
            <button className="flex items-center gap-[2px] px-[3px]"><Icon name="tcube" className="size-[13px]" />[3D / Tudo]</button>
          </div>
          <Canvas />
          <div className="flex h-[15px] shrink-0 items-center">
            <div className="flex w-[149px] items-center gap-[3px] pl-[2px]">
              <Icon name="undo" className="size-[13px]" /><Icon name="redo" className="size-[13px] text-[#bbb]" /><Icon name="zoomi" className="size-[14px]" />
              <Sep /><Icon name="zoomfit" className="size-[14px]" />
              <span className="flex-1 text-center">22%</span>
              <Icon name="right1" className="size-[9px]" />
            </div>
            {STATUS.map((s) => (
              <button key={s.icon} className="flex w-24 shrink-0 items-center border-l border-[#b5b5b5] pl-1 pr-[3px]">
                <Icon name={s.icon} className="size-3" />
                <span className="flex-1 whitespace-nowrap text-center">{s.text}</span>
                <Icon name="right1" className="size-[9px]" />
              </button>
            ))}
            <span className="h-full flex-1 border border-[#ddd] bg-[#f8f8f8]" />
          </div>
        </main>
      </div>

      <div className="flex h-[27px] shrink-0 items-center pl-[3px]">
        <div className="flex h-[21px] items-center">
          <Sep />
          <Popup icon="setsq" className="ml-1 w-[30px]" />
          <span className="w-[6px]" /><Sep />
          <span className="ml-[8px] flex w-[28px] items-center justify-between"><Icon name="check" className="size-[15px]" /><Icon name="right1" className="size-[9px]" /></span>
          <span className="mx-1 flex w-[28px] items-center justify-between text-[#bbb]"><Icon name="zig" className="size-[15px]" /><Icon name="right1" className="size-[9px]" /></span>
          <Popup icon="edit" className="w-[30px]" />
          <button aria-label="Varinha" className="mx-[2px] flex h-5 w-5 items-center justify-center rounded-[2px] border border-[#dadada] bg-[#fcfcfc]"><Icon name="wand" className="size-[14px]" /></button>
          <Sep />
          <button aria-label="Linha-guia" className="ml-[3px] flex size-5 items-center justify-center bg-[#cbe4f8]"><Icon name="guide" className="size-[15px]" /></button>
          <Icon name="right1" className="ml-px size-[9px]" />
          <span className="ml-[2px] w-[56px] leading-[10px]">Meio<br />2</span>
          <button aria-label="Divisões" className="mr-[6px] flex size-[11px] items-center justify-center bg-white"><Icon name="right1" className="size-[9px]" /></button>
          <Sep />
          <button disabled className="ml-[5px] h-[15px] w-[48px] bg-[#fafafa] text-[#999]">OK</button>
          <button disabled className="ml-[2px] mr-[16px] h-[15px] w-[50px] bg-[#fafafa] text-[#999]">Cancelar</button>
        </div>
        <div className="flex h-[21px] items-center pb-1">
          <Tools cell="w-[21px] h-[17px]" items={['|', '!tape', 'bars', 'arc', 'bars', 'layered', 'plate', 'arr', '!barsf', 'plate', '!fillc', 'diabox', 'diamond', 'imgf', '!stack', 'dim', '|', '_', 'flip', 'hatch', 'abc', 'imgf', 'bend', '|', '_', 'ridge', '|', '_', 'book', '|', '_', 'copyb']} />
        </div>
      </div>

      <Dialog />
      <FillMenu />
    </div>
  )
}
